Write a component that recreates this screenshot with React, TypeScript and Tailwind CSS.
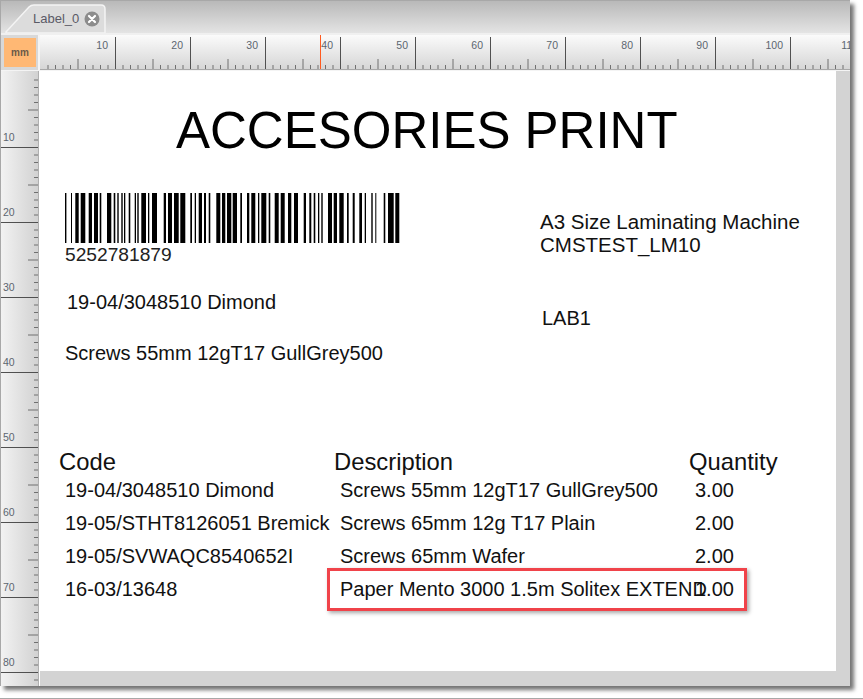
const topMarks = Array.from({ length: 112 }, (_, i) => i);
const sideMarks = Array.from({ length: 82 }, (_, i) => i);

// bars of the code, [from, to] in page pixels
const bars = [
  [65, 66.4], [71, 72], [75.3, 78.7], [80.7, 85.3], [88.7, 92], [94, 98], [99.7, 101.3],
  [107, 111.3], [113.7, 115.3], [117.3, 118.7], [121.3, 122.7], [124, 125.3], [128.7, 130.3],
  [134.7, 136], [137.3, 138.7], [141.3, 146], [148, 149.3], [152, 157], [163.7, 166], [168, 172],
  [174, 178.7], [180.3, 185.3], [190.3, 192], [194.7, 196], [198.7, 202], [204, 206], [208.7, 210.3],
  [216.3, 220.3], [222, 225.3], [227, 231.3], [232.7, 237], [240.3, 242], [247, 249.3], [251.3, 255.3],
  [258, 259.3], [261.3, 266.3], [268.7, 270.3], [274.7, 278.7], [280.7, 284.7], [288, 291.3], [294, 298],
  [303.7, 306], [309.3, 311.3], [313.7, 315.3], [318, 319.3], [321.3, 322.7], [328, 332], [333.7, 337],
  [339.3, 343.7], [347, 348.7], [352.7, 354.7], [359.3, 362], [364.7, 366], [371.3, 372.7], [375.3, 376.3],
  [383.7, 385.3], [388, 393.7], [395.3, 399.3],
];

const rows = [
  { code: '19-04/3048510 Dimond', desc: 'Screws 55mm 12gT17 GullGrey500', qty: '3.00', h: 'h-[33px]' },
  { code: '19-05/STHT8126051 Bremick', desc: 'Screws 65mm 12g T17 Plain', qty: '2.00', h: 'h-[33px]' },
  { code: '19-05/SVWAQC8540652I', desc: 'Screws 65mm Wafer', qty: '2.00', h: 'h-[33px]' },
  { code: '16-03/13648', desc: 'Paper Mento 3000 1.5m Solitex EXTEND', qty: '1.00', h: 'h-[24px]' },
];

function TopRuler() {
  return (
    <svg width="810" height="34" className="block" style={{ fontFamily: 'Liberation Sans, sans-serif' }}>
      {topMarks.map((i) => {
        const x = i * 7.5 + 0.5;
        if (i === 0) return null;
        const major = i % 10 === 0;
        const mid = i % 5 === 0;
        return (
          <line
            key={i}
            x1={x}
            x2={x}
            y1={major ? 2 : mid ? 24 : 30}
            y2={34}
            stroke={major ? '#505050' : '#707070'}
            strokeWidth="1"
          />
        );
      })}
      {topMarks.filter((i) => i > 0 && i % 10 === 0).map((i) => (
        <text key={i} x={i * 7.5 - 7} y={14} textAnchor="end" fontSize="10.5" fill="#5c6670">
          {i}
        </text>
      ))}
      <line x1="280.5" x2="280.5" y1="0" y2="34" stroke="#ff5a1f" strokeWidth="1" />
    </svg>
  );
}

function SideRuler() {
  return (
    <svg width="38" height="615" className="block" style={{ fontFamily: 'Liberation Sans, sans-serif' }}>
      {sideMarks.map((i) => {
        const y = i * 7.5 + 1.5;
        if (i === 0) return null;
        const major = i % 10 === 0;
        const mid = i % 5 === 0;
        return (
          <line
            key={i}
            x1={major ? 0 : mid ? 27 : 33}
            x2={38}
            y1={y}
            y2={y}
            stroke={major ? '#505050' : '#707070'}
            strokeWidth="1"
          />
        );
      })}
      {sideMarks.filter((i) => i > 0 && i % 10 === 0).map((i) => (
        <text key={i} x={2} y={i * 7.5 - 5} fontSize="10.5" fill="#5c6670">
          {i}
        </text>
      ))}
    </svg>
  );
}

function Barcode() {
  return (
    <svg width="335" height="50" className="block blur-[0.4px]">
      {bars.map(([a, b]) => (
        <rect key={a} x={a - 65} y="0" width={b - a} height="50" fill="#000" />
      ))}
    </svg>
  );
}

export default function App() {
  return (
    <div className="w-[863px] h-[699px] bg-white border-b border-[#a8a8a8] overflow-hidden" style={{ fontFamily: 'Liberation Sans, Arial, sans-serif' }}>
      <div className="w-[850px] h-[686px] flex flex-col border-l border-t border-[#a8a8a8] shadow-[4px_4px_4px_rgba(0,0,0,0.55)]">
        <div className="h-[34px] shrink-0 flex items-end pl-[4px] bg-gradient-to-b from-[#b9b9b9] to-[#e4e4e4] border-b-2 border-[#f0f0f0]">
          <div className="relative w-[101px] h-[29px]">
            <svg width="101" height="29" className="absolute inset-0">
              <path d="M1 28 L24 3 Q26 1 29 1 L96 1 Q100 1 100 5 L100 29 L1 29 Z" fill="#dcdcdc" stroke="#f4f4f4" strokeWidth="1.5" />
            </svg>
            <div className="relative flex items-center gap-[5px] pl-[28px] h-full">
              <span className="text-[13px] leading-[16px] text-[#5a5a66]">Label_0</span>
              <svg width="16" height="16" viewBox="0 0 16 16">
                <circle cx="8" cy="8" r="7.5" fill="#8c8c8c" />
                <path d="M5 5 L11 11 M11 5 L5 11" stroke="#fff" strokeWidth="2.2" strokeLinecap="round" />
              </svg>
            </div>
          </div>
        </div>
        <div className="flex h-[36px] shrink-0 border-b border-[#f4f4f4]">
          <div className="w-[39px] p-[3px] pr-[2px] bg-[#d8d8d8] border-r-2 border-[#f4f4f4]">
            <div className="h-full bg-[#ffb874] flex items-center justify-center text-[10px] font-bold text-[#6a5a48]">mm</div>
          </div>
          <div className="flex-1 bg-gradient-to-b from-[#fbfbfb] to-[#d6d6d6] border-b border-[#a8a8a8] overflow-hidden">
            <TopRuler />
          </div>
        </div>
        <div className="flex flex-1 min-h-0">
          <div className="w-[39px] shrink-0 border-r border-white">
            <div className="h-full bg-gradient-to-r from-[#f2f2f2] to-[#d2d2d2] border-r border-[#b0b0b0] overflow-hidden">
              <SideRuler />
            </div>
          </div>
          <div className="flex-1 bg-[#d3d3d3] pr-[14px] pb-[15px]">
            <div className="relative h-full bg-white flex flex-col text-[#111] text-[20px] leading-[24px] whitespace-nowrap">
              <div className="mt-[28px] pl-[136px] text-[51px] leading-[64px] text-black">ACCESORIES PRINT</div>

              <div className="mt-[30px] grid grid-cols-[475px_1fr] pl-[25px]">
                <div className="flex flex-col">
                  <Barcode />
                  <div className="text-[19.2px] text-[#222]">5252781879</div>
                  <div className="mt-[23px] pl-[2px]">19-04/3048510 Dimond</div>
                  <div className="mt-[27px]">Screws 55mm 12gT17 GullGrey500</div>
                </div>
                <div className="flex flex-col pt-[17px] text-[20.5px]">
                  <div>A3 Size Laminating Machine</div>
                  <div className="-mt-[1px]">CMSTEST_LM10</div>
                  <div className="mt-[49px] pl-[2px] text-[20px]">LAB1</div>
                </div>
              </div>

              <div className="mt-[85px] grid grid-cols-[275px_355px_1fr] pl-[19px] text-[23.8px] h-[28px]">
                <div>Code</div>
                <div>Description</div>
                <div>Quantity</div>
              </div>
              {rows.map((r) => (
                <div key={r.code} className={`grid grid-cols-[275px_355px_1fr] pl-[25px] ${r.h}`}>
                  <div>{r.code}</div>
                  <div>{r.desc}</div>
                  <div>{r.qty}</div>
                </div>
              ))}

              <div className="absolute left-[287px] top-[497px] w-[420px] h-[43px] border-[3px] border-[#f0434a] shadow-[2px_2px_4px_rgba(0,0,0,0.35)]" />
            </div>
          </div>
        </div>
      </div>
    </div>
  );
}
